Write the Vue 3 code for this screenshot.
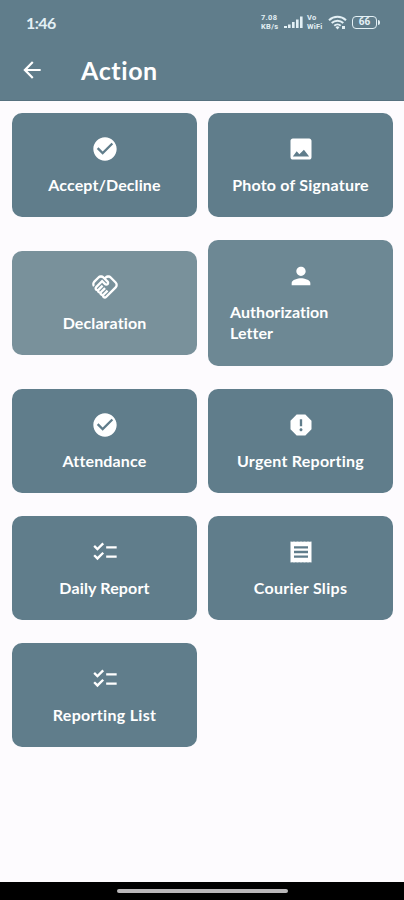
<template>
  <div class="screen">
    <header class="app-header">
      <div class="status-bar">
        <span class="clock">1:46</span>
        <div class="status-icons">
          <div class="stacked speed"><span>7.08</span><span>KB/s</span></div>
          <svg class="signal" viewBox="0 0 20 14">
            <path d="M0 11h3v2H0zM4 9.5h2.6V13H4zM8 7h2.6v6H8zM12 4.5h2.6V13H12zM16 1.5h2.6V13H16z" />
          </svg>
          <div class="stacked vowifi"><span>Vo</span><span>WiFi</span></div>
          <svg class="wifi" viewBox="0 0 19 15">
            <g fill="none" stroke="currentColor" stroke-width="2">
              <path d="M1 5.2a12.5 12.5 0 0 1 17 0" />
              <path d="M3.7 8.1a8.5 8.5 0 0 1 11.6 0" />
              <path d="M6.3 10.8a4.7 4.7 0 0 1 6.4 0" />
            </g>
            <path d="M7.5 12.2a3 3 0 0 1 4 0l-2 2.3zM14 11h3v3h-3z" />
          </svg>
          <div class="battery"><span>66</span></div>
        </div>
      </div>
      <div class="title-bar">
        <button class="back" aria-label="Back">
          <svg viewBox="0 0 24 24"><path d="M20 11H7.83l5.59-5.59L12 4l-8 8 8 8 1.41-1.41L7.83 13H20v-2z" /></svg>
        </button>
        <h1>Action</h1>
      </div>
    </header>

    <main class="tiles">
      <button v-for="tile in tiles" :key="tile.label" class="tile" :class="tile.tone">
        <svg viewBox="0 0 24 24"><path :d="icons[tile.icon]" /></svg>
        <span class="label" :style="{ letterSpacing: `${tile.spacing}px` }">{{ tile.label }}</span>
      </button>
    </main>

    <footer class="nav-bar"><div class="handle"></div></footer>
  </div>
</template>

<script setup>
const icons = {
  check: 'M12 2C6.48 2 2 6.48 2 12s4.48 10 10 10 10-4.48 10-10S17.52 2 12 2zm-2 15l-5-5 1.41-1.41L10 14.17l7.59-7.59L19 8l-9 9z',
  image: 'M21 19V5c0-1.1-.9-2-2-2H5c-1.1 0-2 .9-2 2v14c0 1.1.9 2 2 2h14c1.1 0 2-.9 2-2zM8.3 14l2.3 2.4L14.5 12.6 19 18.4H5l3.3-4.4z',
  handshake: 'M12.22 19.85c-.18.18-.5.21-.71 0-.18-.18-.21-.5 0-.71l3.39-3.39-1.41-1.41-3.39 3.39c-.19.2-.51.19-.71 0-.21-.21-.18-.53 0-.71l3.39-3.39-1.41-1.41-3.39 3.39c-.18.18-.5.21-.71 0-.19-.19-.19-.51 0-.71l3.39-3.39-1.42-1.41-3.39 3.39c-.18.18-.5.21-.71 0-.19-.2-.19-.51 0-.71L9.52 8.4l1.87 1.86c.95.95 2.59.94 3.54 0 .98-.98.98-2.56 0-3.54l-1.86-1.86.28-.28c.78-.78 2.05-.78 2.83 0l4.24 4.24c.78.78.78 2.05 0 2.83l-8.2 8.2zm9.61-6.78c1.56-1.56 1.56-4.09 0-5.66l-4.24-4.24c-1.56-1.56-4.09-1.56-5.66 0l-.28.28-.28-.28c-1.56-1.56-4.09-1.56-5.66 0L2.17 6.71c-1.42 1.42-1.55 3.63-.4 5.19l1.45-1.45c-.39-.75-.26-1.7.37-2.33l3.54-3.54c.78-.78 2.05-.78 2.83 0l3.56 3.56c.18.18.21.5 0 .71-.21.21-.53.18-.71 0L9.52 5.57l-5.8 5.79c-.98.97-.98 2.56 0 3.54.39.39.89.63 1.42.7.07.52.3 1.02.7 1.42.4.4.9.63 1.42.7.07.52.3 1.02.7 1.42.4.4.9.63 1.42.7.07.54.31 1.03.7 1.42.47.47 1.1.73 1.77.73s1.3-.26 1.77-.73l8.21-8.19z',
  person: 'M12 12c2.21 0 4-1.79 4-4s-1.79-4-4-4-4 1.79-4 4 1.79 4 4 4zm0 2c-2.67 0-8 1.34-8 4v2h16v-2c0-2.66-5.33-4-8-4z',
  report: 'M15.73 3H8.27L3 8.27v7.46L8.27 21h7.46L21 15.73V8.27L15.73 3zM12 17.3c-.72 0-1.3-.58-1.3-1.3s.58-1.3 1.3-1.3 1.3.58 1.3 1.3-.58 1.3-1.3 1.3zm1-4.3h-2V7h2v6z',
  checklist: 'M22 7h-9v2h9V7zm0 8h-9v2h9v-2zM5.54 11L2 7.46l1.41-1.41 2.12 2.12 4.24-4.24 1.41 1.41L5.54 11zm0 8L2 15.46l1.41-1.41 2.12 2.12 4.24-4.24 1.41 1.41L5.54 19z',
  receipt: 'M19.5 3.3L18 2.9l-1.5.4-1.5-.4-1.5.4-1.5-.4-1.5.4L9 2.9l-1.5.4L6 2.9l-1.5.4L3 2.9v18.2l1.5-.4 1.5.4 1.5-.4 1.5.4 1.5-.4 1.5.4 1.5-.4 1.5.4 1.5-.4 1.5.4 1.5-.4 1.5.4V2.9zM18 17H6v-2h12zm0-4H6v-2h12zm0-4H6V7h12z',
}

const tiles = [
  { label: 'Accept/Decline', icon: 'check', spacing: 0.1 },
  { label: 'Photo of Signature', icon: 'image', spacing: 0.22 },
  { label: 'Declaration', icon: 'handshake', tone: 'pale', spacing: 0.1 },
  { label: 'Authorization Letter', icon: 'person', tone: 'soft', spacing: 0.05 },
  { label: 'Attendance', icon: 'check', spacing: 0.15 },
  { label: 'Urgent Reporting', icon: 'report', spacing: 0.25 },
  { label: 'Daily Report', icon: 'checklist', spacing: 0.15 },
  { label: 'Courier Slips', icon: 'receipt', spacing: 0.3 },
  { label: 'Reporting List', icon: 'checklist', spacing: 0.3 },
]
</script>

<style>
body {
  margin: 0;
}
</style>

<style scoped>
.screen {
  display: flex;
  flex-direction: column;
  height: 900px;
  background: #fdfbfe;
  color: #fff;
  font-family: Lato, "Open Sans", sans-serif;
  font-variant-ligatures: none;
}
svg {
  display: block;
  fill: currentColor;
}
button {
  border: none;
  padding: 0;
  color: inherit;
  font: inherit;
}
.app-header {
  box-sizing: border-box;
  height: 101px;
  background: #607d8b;
  border-bottom: 1px solid #56717f;
}
.status-bar {
  display: flex;
  align-items: center;
  justify-content: space-between;
  height: 44px;
  padding: 0 25px 0 26px;
  color: #e3f0f5;
}
.clock {
  font-size: 16px;
  font-weight: 700;
  letter-spacing: -0.6px;
}
.status-icons {
  display: flex;
  align-items: center;
}
.stacked {
  display: flex;
  flex-direction: column;
  font: 700 7.5px/9px Roboto, sans-serif;
}
.speed {
  width: 20px;
  margin-right: 3px;
  letter-spacing: 0.3px;
}
.signal {
  width: 20px;
  height: 14px;
  margin-right: 3px;
}
.vowifi {
  width: 19px;
  margin-right: 2px;
  letter-spacing: 0.2px;
}
.wifi {
  width: 19px;
  height: 15px;
  margin-right: 5px;
}
.battery {
  position: relative;
  display: flex;
  align-items: center;
  justify-content: center;
  box-sizing: border-box;
  width: 25px;
  height: 13px;
  margin-right: 2px;
  border: 1.5px solid currentColor;
  border-radius: 4px;
  font: 700 10px/10px Roboto, sans-serif;
}
.battery::after {
  content: "";
  position: absolute;
  right: -4px;
  width: 2px;
  height: 5px;
  border-radius: 0 2px 2px 0;
  background: currentColor;
}
.title-bar {
  display: flex;
  align-items: center;
  height: 52px;
  padding-left: 19px;
}
.back {
  background: none;
}
.back svg {
  width: 26px;
  height: 26px;
}
h1 {
  margin: 0 0 1px 36px;
  font-size: 25px;
  font-weight: 700;
  letter-spacing: 0.6px;
}
.tiles {
  flex: 1;
  display: grid;
  grid-template-columns: 185px 185px;
  gap: 23px 11px;
  align-items: center;
  align-content: start;
  padding: 12px 12px 0;
}
.tile {
  display: flex;
  flex-direction: column;
  align-items: center;
  gap: 11px;
  padding: 22px;
  border-radius: 10px;
  background: #607d8b;
}
.tile.pale {
  background: #79919b;
}
.tile.soft {
  padding-bottom: 23px;
  background: #6d8894;
}
.tile svg {
  width: 28px;
  height: 28px;
}
.label {
  font-size: 16px;
  font-weight: 700;
  line-height: 21px;
  text-align: left;
}
.nav-bar {
  display: flex;
  justify-content: center;
  align-items: center;
  height: 18px;
  background: #000;
}
.handle {
  width: 171px;
  height: 4px;
  border-radius: 2px;
  background: #b9b7b9;
}
</style>
